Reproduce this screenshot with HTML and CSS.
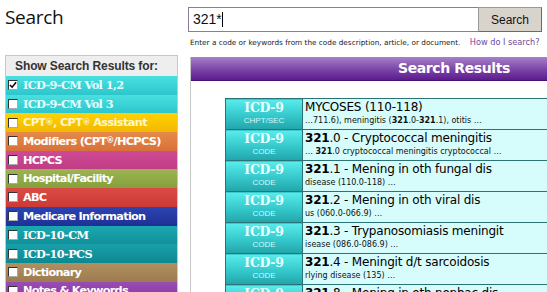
FILE: index.html
```html
<!DOCTYPE html>
<html lang="en">
<head>
  <meta charset="UTF-8" />
  <title>Search</title>
  <link rel="stylesheet" href="styles.css">
</head>
<body>
  <div class="top">
    <h1 class="title">Search</h1>
    <div class="search-box">
      <div class="search-row">
        <div class="search-input">321*<span class="caret"></span></div>
        <button class="search-btn">Search</button>
      </div>
      <p class="help">Enter a code or keywords from the code description, article, or document. <a href="#">How do I search?</a></p>
    </div>
  </div>

  <div class="main">
    <aside class="filters">
      <div class="filters-head">Show Search Results for:</div>
      <label class="filter icd9"><span class="box checked"><svg viewBox="0 0 9 9" width="8" height="8"><path d="M1 4.5 L3.5 7 L8 1.5" fill="none" stroke="#000" stroke-width="1.7"/></svg></span>ICD-9-CM Vol 1,2</label>
      <label class="filter icd9"><span class="box"></span>ICD-9-CM Vol 3</label>
      <label class="filter cpt"><span class="box"></span>CPT<sup>®</sup>, CPT<sup>®</sup>&nbsp;Assistant</label>
      <label class="filter mod"><span class="box"></span>Modifiers (CPT<sup>®</sup>/HCPCS)</label>
      <label class="filter hcpcs"><span class="box"></span>HCPCS</label>
      <label class="filter hosp"><span class="box"></span>Hospital/Facility</label>
      <label class="filter abc"><span class="box"></span>ABC</label>
      <label class="filter medicare"><span class="box"></span>Medicare Information</label>
      <label class="filter icd10cm"><span class="box"></span>ICD-10-CM</label>
      <label class="filter icd10pcs"><span class="box"></span>ICD-10-PCS</label>
      <label class="filter dict"><span class="box"></span>Dictionary</label>
      <label class="filter notes"><span class="box"></span>Notes &amp; Keywords</label>
    </aside>

    <section class="results">
      <div class="results-head">Search Results</div>
      <table class="hits">
        <tr>
          <td class="kind"><b>ICD-9</b><small>CHPT/SEC</small></td>
          <td class="hit"><div class="hit-title">MYCOSES (110-118)</div><div class="hit-snip">…711.6), meningitis (<b>321</b>.0-<b>321</b>.1), otitis …</div></td>
        </tr>
        <tr>
          <td class="kind"><b>ICD-9</b><small>CODE</small></td>
          <td class="hit"><div class="hit-title"><b>321</b>.0 - Cryptococcal meningitis</div><div class="hit-snip">… <b>321</b>.0 cryptococcal meningitis cryptococcal …</div></td>
        </tr>
        <tr>
          <td class="kind"><b>ICD-9</b><small>CODE</small></td>
          <td class="hit"><div class="hit-title"><b>321</b>.1 - Mening in oth fungal dis</div><div class="hit-snip">disease (110.0-118) …</div></td>
        </tr>
        <tr>
          <td class="kind"><b>ICD-9</b><small>CODE</small></td>
          <td class="hit"><div class="hit-title"><b>321</b>.2 - Mening in oth viral dis</div><div class="hit-snip">us (060.0-066.9) …</div></td>
        </tr>
        <tr>
          <td class="kind"><b>ICD-9</b><small>CODE</small></td>
          <td class="hit"><div class="hit-title"><b>321</b>.3 - Trypanosomiasis meningit</div><div class="hit-snip">isease (086.0-086.9) …</div></td>
        </tr>
        <tr>
          <td class="kind"><b>ICD-9</b><small>CODE</small></td>
          <td class="hit"><div class="hit-title"><b>321</b>.4 - Meningit d/t sarcoidosis</div><div class="hit-snip">rlying disease (135) …</div></td>
        </tr>
        <tr>
          <td class="kind"><b>ICD-9</b><small>CODE</small></td>
          <td class="hit"><div class="hit-title"><b>321</b>.8 - Mening in oth nonbac dis</div><div class="hit-snip">…</div></td>
        </tr>
      </table>
    </section>
  </div>
</body>
</html>
```

FILE: styles.css
```css
* {
  margin: 0;
  padding: 0;
  box-sizing: border-box;
}
html, body {
  height: 100%;
  overflow: hidden;
}
body {
  background: #fff;
  font-family: 'DejaVu Sans', sans-serif;
  color: #000;
}

/* top bar */
.top {
  display: flex;
  padding: 7px 0 0 5px;
  height: 55px;
}
.title {
  width: 183px;
  flex: none;
  font-family: 'Open Sans', sans-serif;
  font-weight: normal;
  font-size: 19px;
  line-height: 20px;
  color: #111;
  letter-spacing: -0.3px;
}
.search-box {
  width: 356px;
  flex: none;
}
.search-row {
  display: flex;
  height: 25px;
}
.search-input {
  width: 290px;
  border: 1px solid #8a7c9a;
  border-right: none;
  font-family: 'Liberation Sans', sans-serif;
  font-size: 14px;
  line-height: 23px;
  padding-left: 4px;
  color: #111;
}
.caret {
  display: inline-block;
  width: 1px;
  height: 15px;
  background: #000;
  vertical-align: -3px;
}
.search-btn {
  width: 64px;
  background: #d8d4cc;
  border: 1px solid #6a6a6a;
  border-top-color: #999;
  border-left-color: #999;
  font-family: 'Liberation Sans', sans-serif;
  font-size: 12px;
  color: #111;
}
.help {
  margin-top: 5px;
  margin-left: 2px;
  font-size: 7.3px;
  color: #222;
  white-space: nowrap;
}
.help a {
  font-size: 8.2px;
  color: #6a4aa0;
  text-decoration: none;
  margin-left: 7px;
}

.main {
  display: flex;
  align-items: flex-start;
}

/* filter panel */
.filters {
  flex: none;
  margin-left: 5px;
  width: 173px;
  border: 1px solid #c8c8c8;
  border-bottom: none;
  background: #fff;
}
.filters-head {
  height: 20px;
  background: #eeeeee;
  font-family: 'Liberation Sans', sans-serif;
  font-weight: bold;
  font-size: 12px;
  line-height: 20px;
  color: #333;
  padding-left: 9px;
  letter-spacing: -0.1px;
}
.filter {
  display: flex;
  align-items: center;
  height: 18.7px;
  padding-left: 2px;
  font-family: 'DejaVu Sans', sans-serif;
  font-weight: bold;
  font-size: 11.3px;
  color: #fff;
  letter-spacing: -0.75px;
  white-space: nowrap;
}
.filter sup {
  font-size: 8px;
  line-height: 0;
  vertical-align: 4px;
}
.box {
  width: 10px;
  height: 10px;
  margin-right: 5px;
  background: #fff;
  border: 1px solid #333;
  border-bottom-color: #aaa;
  border-right-color: #aaa;
  flex: none;
  display: flex;
  align-items: center;
  justify-content: center;
}
.icd9 {
  background: linear-gradient(#4ae0e0, #2cc6cc);
  color: #e8ffff;
  font-family: 'DejaVu Serif', serif;
  letter-spacing: -0.6px;
}
.cpt { background: linear-gradient(#ffd200, #f2b800); color: #fff7c8; letter-spacing: -0.6px; }
.mod { background: linear-gradient(#e68a4a, #d8703a); letter-spacing: -0.7px; }
.hcpcs { background: linear-gradient(#cf4a94, #c03c84); }
.hosp { background: linear-gradient(#9cb452, #86a03e); }
.abc { background: linear-gradient(#dc4a44, #cc3a36); }
.medicare { background: linear-gradient(#2c44b0, #1e3096); }
.icd10cm { background: linear-gradient(#1ca8b0, #10909a); font-family: 'DejaVu Serif', serif; letter-spacing: -0.6px; }
.icd10pcs { background: linear-gradient(#1aa0aa, #0c8890); font-family: 'DejaVu Serif', serif; letter-spacing: -0.6px; }
.dict { background: linear-gradient(#b09060, #9c7c4e); }
.notes { background: linear-gradient(#9a4cb4, #8438a0); }

/* results */
.results {
  flex: none;
  margin-left: 12px;
  margin-top: 2px;
  width: 420px;
  min-height: 300px;
  border-left: 1px solid #c8c8c8;
}
.results-head {
  height: 24px;
  background: linear-gradient(#a880c8, #7a44a8 55%, #5c1c8c);
  border-bottom: 1px solid #4a1070;
  color: #fff;
  font-family: 'DejaVu Sans', sans-serif;
  font-weight: bold;
  font-size: 14px;
  line-height: 23px;
  padding-left: 207px;
  letter-spacing: -0.4px;
}
.hits {
  margin: 17px 0 0 34px;
  border-collapse: collapse;
  width: 380px;
}
.hits td {
  height: 31px;
  border: 1px solid #2a7478;
  vertical-align: top;
}
.kind {
  width: 77px;
  background: linear-gradient(#58ecec, #32c4c8 60%, #22a4aa);
  text-align: center;
  color: #e8ffff;
}
.kind b {
  display: block;
  font-family: 'DejaVu Serif', serif;
  font-size: 12.5px;
  line-height: 15px;
  margin-top: 1px;
  letter-spacing: -0.3px;
}
.kind small {
  display: block;
  font-family: 'Liberation Sans', sans-serif;
  font-size: 8px;
  line-height: 12px;
  color: #d0f8f8;
}
.hit {
  background: #d6fcfc;
  padding-left: 2px;
}
.hit-title {
  font-size: 12px;
  line-height: 15px;
  margin-top: 1px;
  white-space: nowrap;
  letter-spacing: -0.2px;
}
.hit-snip {
  font-size: 8px;
  line-height: 12px;
  white-space: nowrap;
  color: #111;
}
```
